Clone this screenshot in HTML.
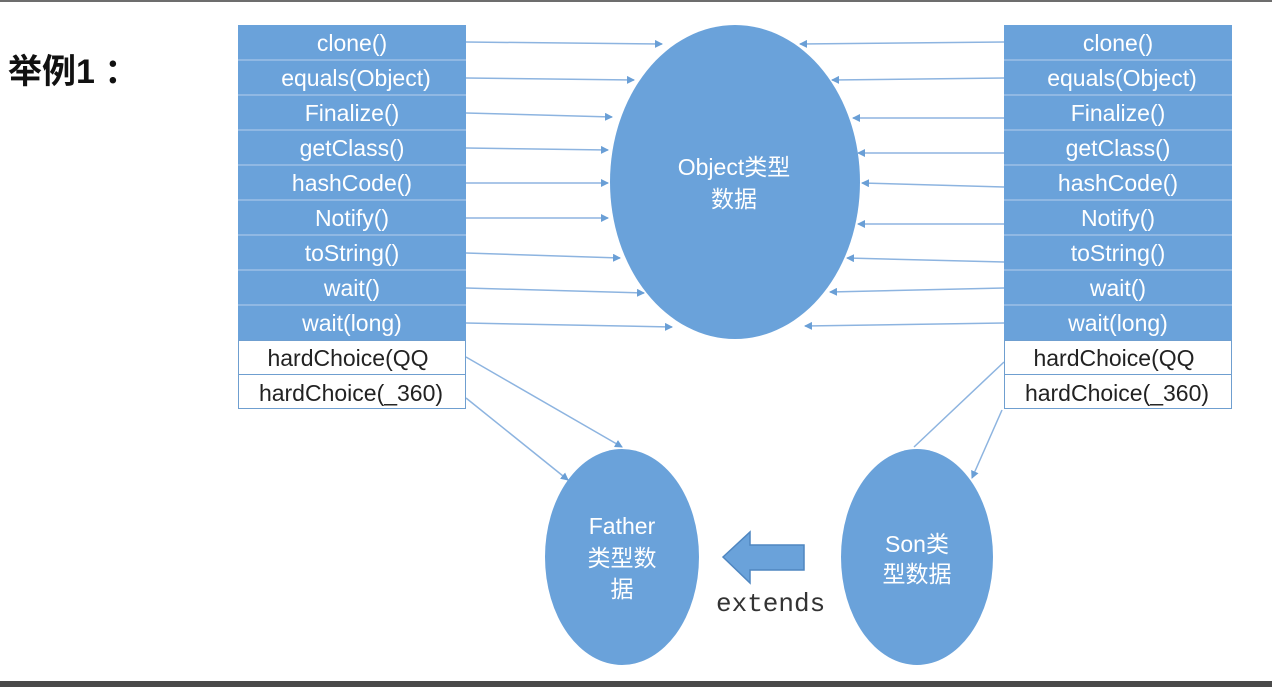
<!DOCTYPE html>
<html><head><meta charset="utf-8"><style>
html,body{margin:0;padding:0;background:#fff;width:1272px;height:687px;overflow:hidden}
svg{display:block}
.w{font-family:"Liberation Sans","Noto Sans CJK SC",sans-serif;fill:#fff;font-size:23px;text-anchor:middle}
.k{font-family:"Liberation Sans","Noto Sans CJK SC",sans-serif;fill:#222;font-size:23px;text-anchor:middle}
</style></head><body>
<svg width="1272" height="687" viewBox="0 0 1272 687">
<defs><marker id="a" markerWidth="8" markerHeight="8" refX="7" refY="4" orient="auto" markerUnits="userSpaceOnUse"><path d="M0,0 L8,4 L0,8 z" fill="#6a9fd6"/></marker></defs>
<rect x="0" y="0" width="1272" height="2" fill="#6d6d6d"/>
<rect x="0" y="681" width="1272" height="6" fill="#4a4a4a"/>
<text x="8" y="83" font-family="Liberation Sans,'Noto Sans CJK SC',sans-serif" font-weight="bold" font-size="34" fill="#111">举例1 ：</text>
<g stroke="#8db4e0" stroke-width="1.5" marker-end="url(#a)" fill="none">
<line x1="466" y1="42" x2="662" y2="44"/><line x1="466" y1="78" x2="634" y2="80"/><line x1="466" y1="113" x2="612" y2="117"/><line x1="466" y1="148" x2="608" y2="150"/><line x1="466" y1="183" x2="608" y2="183"/><line x1="466" y1="218" x2="608" y2="218"/><line x1="466" y1="253" x2="620" y2="258"/><line x1="466" y1="288" x2="644" y2="293"/><line x1="466" y1="323" x2="672" y2="327"/>
<line x1="1004" y1="42" x2="800" y2="44"/><line x1="1004" y1="78" x2="832" y2="80"/><line x1="1004" y1="118" x2="853" y2="118"/><line x1="1004" y1="153" x2="858" y2="153"/><line x1="1004" y1="187" x2="862" y2="183"/><line x1="1004" y1="224" x2="858" y2="224"/><line x1="1004" y1="262" x2="847" y2="258"/><line x1="1004" y1="288" x2="830" y2="292"/><line x1="1004" y1="323" x2="805" y2="326"/>
<line x1="466" y1="357" x2="622" y2="447"/><line x1="466" y1="398" x2="568" y2="480"/>
<line x1="1002" y1="410" x2="972" y2="478"/>
</g>
<line x1="1004" y1="362" x2="914" y2="447" stroke="#8db4e0" stroke-width="1.5"/>
<ellipse cx="735" cy="182" rx="125" ry="157" fill="#6aa2da"/>
<ellipse cx="622" cy="557" rx="77" ry="108" fill="#6aa2da"/>
<ellipse cx="917" cy="557" rx="76" ry="108" fill="#6aa2da"/>
<text class="w" x="734" y="175" font-size="24">Object类型</text><text class="w" x="734" y="207" font-size="24">数据</text>
<text class="w" x="622" y="534">Father</text><text class="w" x="622" y="566">类型数</text><text class="w" x="622" y="597">据</text>
<text class="w" x="917" y="552">Son类</text><text class="w" x="917" y="582">型数据</text>
<path d="M723,557 L750,532 L750,545 L804,545 L804,570 L750,570 L750,583 Z" fill="#6aa2da" stroke="#4f86c0" stroke-width="1.5"/>
<text x="716" y="611" font-family="Liberation Mono,monospace" font-size="26" fill="#333">extends</text>
<g id="L">
<rect x="238" y="25" width="228" height="315" fill="#6aa2da"/>
<g stroke="#9cc0e6" stroke-width="1.5"><line x1="238" y1="60" x2="466" y2="60"/><line x1="238" y1="95" x2="466" y2="95"/><line x1="238" y1="130" x2="466" y2="130"/><line x1="238" y1="165" x2="466" y2="165"/><line x1="238" y1="200" x2="466" y2="200"/><line x1="238" y1="235" x2="466" y2="235"/><line x1="238" y1="270" x2="466" y2="270"/><line x1="238" y1="305" x2="466" y2="305"/></g>
<rect x="238.5" y="340.5" width="227" height="34" fill="#fff" stroke="#6f9fd0"/>
<rect x="238.5" y="374.5" width="227" height="34" fill="#fff" stroke="#6f9fd0"/>
<text class="w" x="352" y="51">clone()</text><text class="w" x="356" y="86">equals(Object)</text><text class="w" x="352" y="121">Finalize()</text><text class="w" x="352" y="156">getClass()</text><text class="w" x="352" y="191">hashCode()</text><text class="w" x="352" y="226">Notify()</text><text class="w" x="352" y="261">toString()</text><text class="w" x="352" y="296">wait()</text><text class="w" x="352" y="331">wait(long)</text>
<text class="k" x="348" y="366">hardChoice(QQ</text><text class="k" x="351" y="401">hardChoice(_360)</text>
</g>
<use href="#L" x="766"/>
</svg>
</body></html>
